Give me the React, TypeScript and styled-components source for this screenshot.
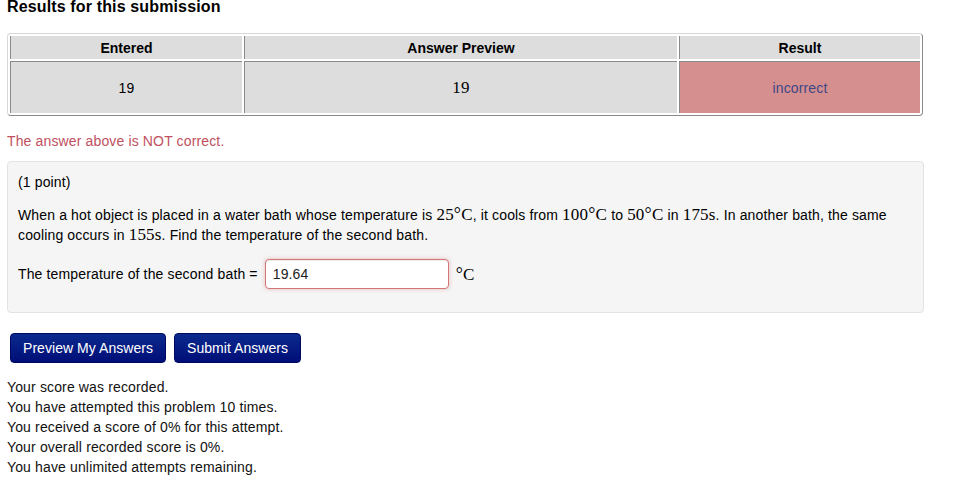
import React from 'react';
import styled, { createGlobalStyle } from 'styled-components';

const Global = createGlobalStyle`
    body {
        margin: 0;
        background: #fff;
        font-family: "Liberation Sans", Arial, sans-serif;
        font-size: 14px;
        line-height: 20px;
        letter-spacing: 0.14px;
        color: #000;
    }
`;

const Page = styled.div`
    width: 917px;
    padding: 0 7px;
`;

const Title = styled.h3`
    margin: -2px 0 17px;
    font-size: 16px;
    line-height: 18px;
    font-weight: bold;
`;

const Results = styled.table`
    width: 916px;
    table-layout: fixed;
    border-collapse: separate;
    border-spacing: 2px;
    border: 1px solid #d8d8d8;
    border-right-color: #8a8a8a;
    border-bottom-color: #8a8a8a;
    border-radius: 4px;
`;

const Head = styled.th`
    height: 23px;
    padding: 0;
    background: #dddddd;
    border-left: 1px solid #8a8a8a;
    font-size: 14px;
    font-weight: bold;
    letter-spacing: 0;
    text-align: center;
    vertical-align: middle;
`;

const Cell = styled.td<{ $bad?: boolean }>`
    height: 51px;
    padding: 0;
    background: ${(p) => (p.$bad ? '#d58f8e' : '#dddddd')};
    color: ${(p) => (p.$bad ? '#3e4786' : '#000')};
    border-top: 1px solid #8a8a8a;
    border-left: 1px solid #8a8a8a;
    text-align: center;
    vertical-align: middle;
    font-size: 14px;
`;

const Math = styled.span<{ $size?: number }>`
    font-family: "Liberation Serif", "DejaVu Serif", serif;
    font-size: ${(p) => p.$size || 17}px;
    line-height: 14px;
    letter-spacing: 0.2px;
`;

const Notice = styled.div`
    margin: 15px 0 10px;
    color: #c05060;
`;

const Problem = styled.div`
    border: 1px solid #e3e3e3;
    border-radius: 4px;
    background: #f5f5f5;
    padding: 10px 10px 23px;
`;

const Para = styled.p`
    margin: 0 0 13px;
`;

const AnswerRow = styled.div`
    display: flex;
    align-items: center;
    gap: 7px;
    margin-top: 14px;
`;

const Input = styled.input`
    box-sizing: border-box;
    width: 184px;
    height: 30px;
    padding: 4px 7px;
    font-family: "Liberation Sans", Arial, sans-serif;
    font-size: 14px;
    letter-spacing: 0.14px;
    color: #222;
    background: #fff;
    border: 1px solid #d27676;
    border-radius: 4px;
    box-shadow: inset 0 1px 1px rgba(0, 0, 0, 0.075), 0 0 4px rgba(210, 110, 110, 0.45);
    outline: none;
`;

const Buttons = styled.div`
    display: flex;
    gap: 8px;
    margin: 20px 0 14px 3px;
`;

const Button = styled.button`
    height: 30px;
    padding: 0 12px;
    font-family: "Liberation Sans", Arial, sans-serif;
    font-size: 14px;
    letter-spacing: 0.05px;
    color: #fff;
    background: linear-gradient(#0b2a8e, #000e78);
    border: 1px solid #000a5c;
    border-radius: 4px;
    cursor: pointer;
`;

const Status = styled.div`
    color: #111;
`;

const Deg = styled.span`
    font-size: 1.05em;
`;

export default function App() {
    return (
        <Page>
            <Global />
            <Title>Results for this submission</Title>
            <Results>
                <colgroup>
                    <col style={{ width: 232 }} />
                    <col style={{ width: 433 }} />
                    <col style={{ width: 241 }} />
                </colgroup>
                <thead>
                    <tr>
                        <Head>Entered</Head>
                        <Head>Answer Preview</Head>
                        <Head>Result</Head>
                    </tr>
                </thead>
                <tbody>
                    <tr>
                        <Cell>19</Cell>
                        <Cell>
                            <Math $size={17}>19</Math>
                        </Cell>
                        <Cell $bad>incorrect</Cell>
                    </tr>
                </tbody>
            </Results>

            <Notice>The answer above is NOT correct.</Notice>

            <Problem>
                <Para>(1 point)</Para>
                <Para>
                    When a hot object is placed in a water bath whose temperature is{' '}
                    <Math>
                        25<Deg>°</Deg>C
                    </Math>
                    , it cools from{' '}
                    <Math>
                        100<Deg>°</Deg>C
                    </Math>{' '}
                    to{' '}
                    <Math>
                        50<Deg>°</Deg>C
                    </Math>{' '}
                    in <Math>175s</Math>. In another bath, the same cooling occurs in{' '}
                    <Math>155s</Math>. Find the temperature of the second bath.
                </Para>
                <AnswerRow>
                    <span>The temperature of the second bath =</span>
                    <Input defaultValue="19.64" />
                    <Math>
                        <Deg>°</Deg>C
                    </Math>
                </AnswerRow>
            </Problem>

            <Buttons>
                <Button>Preview My Answers</Button>
                <Button>Submit Answers</Button>
            </Buttons>

            <Status>
                <div>Your score was recorded.</div>
                <div>You have attempted this problem 10 times.</div>
                <div>You received a score of 0% for this attempt.</div>
                <div>Your overall recorded score is 0%.</div>
                <div>You have unlimited attempts remaining.</div>
            </Status>
        </Page>
    );
}
